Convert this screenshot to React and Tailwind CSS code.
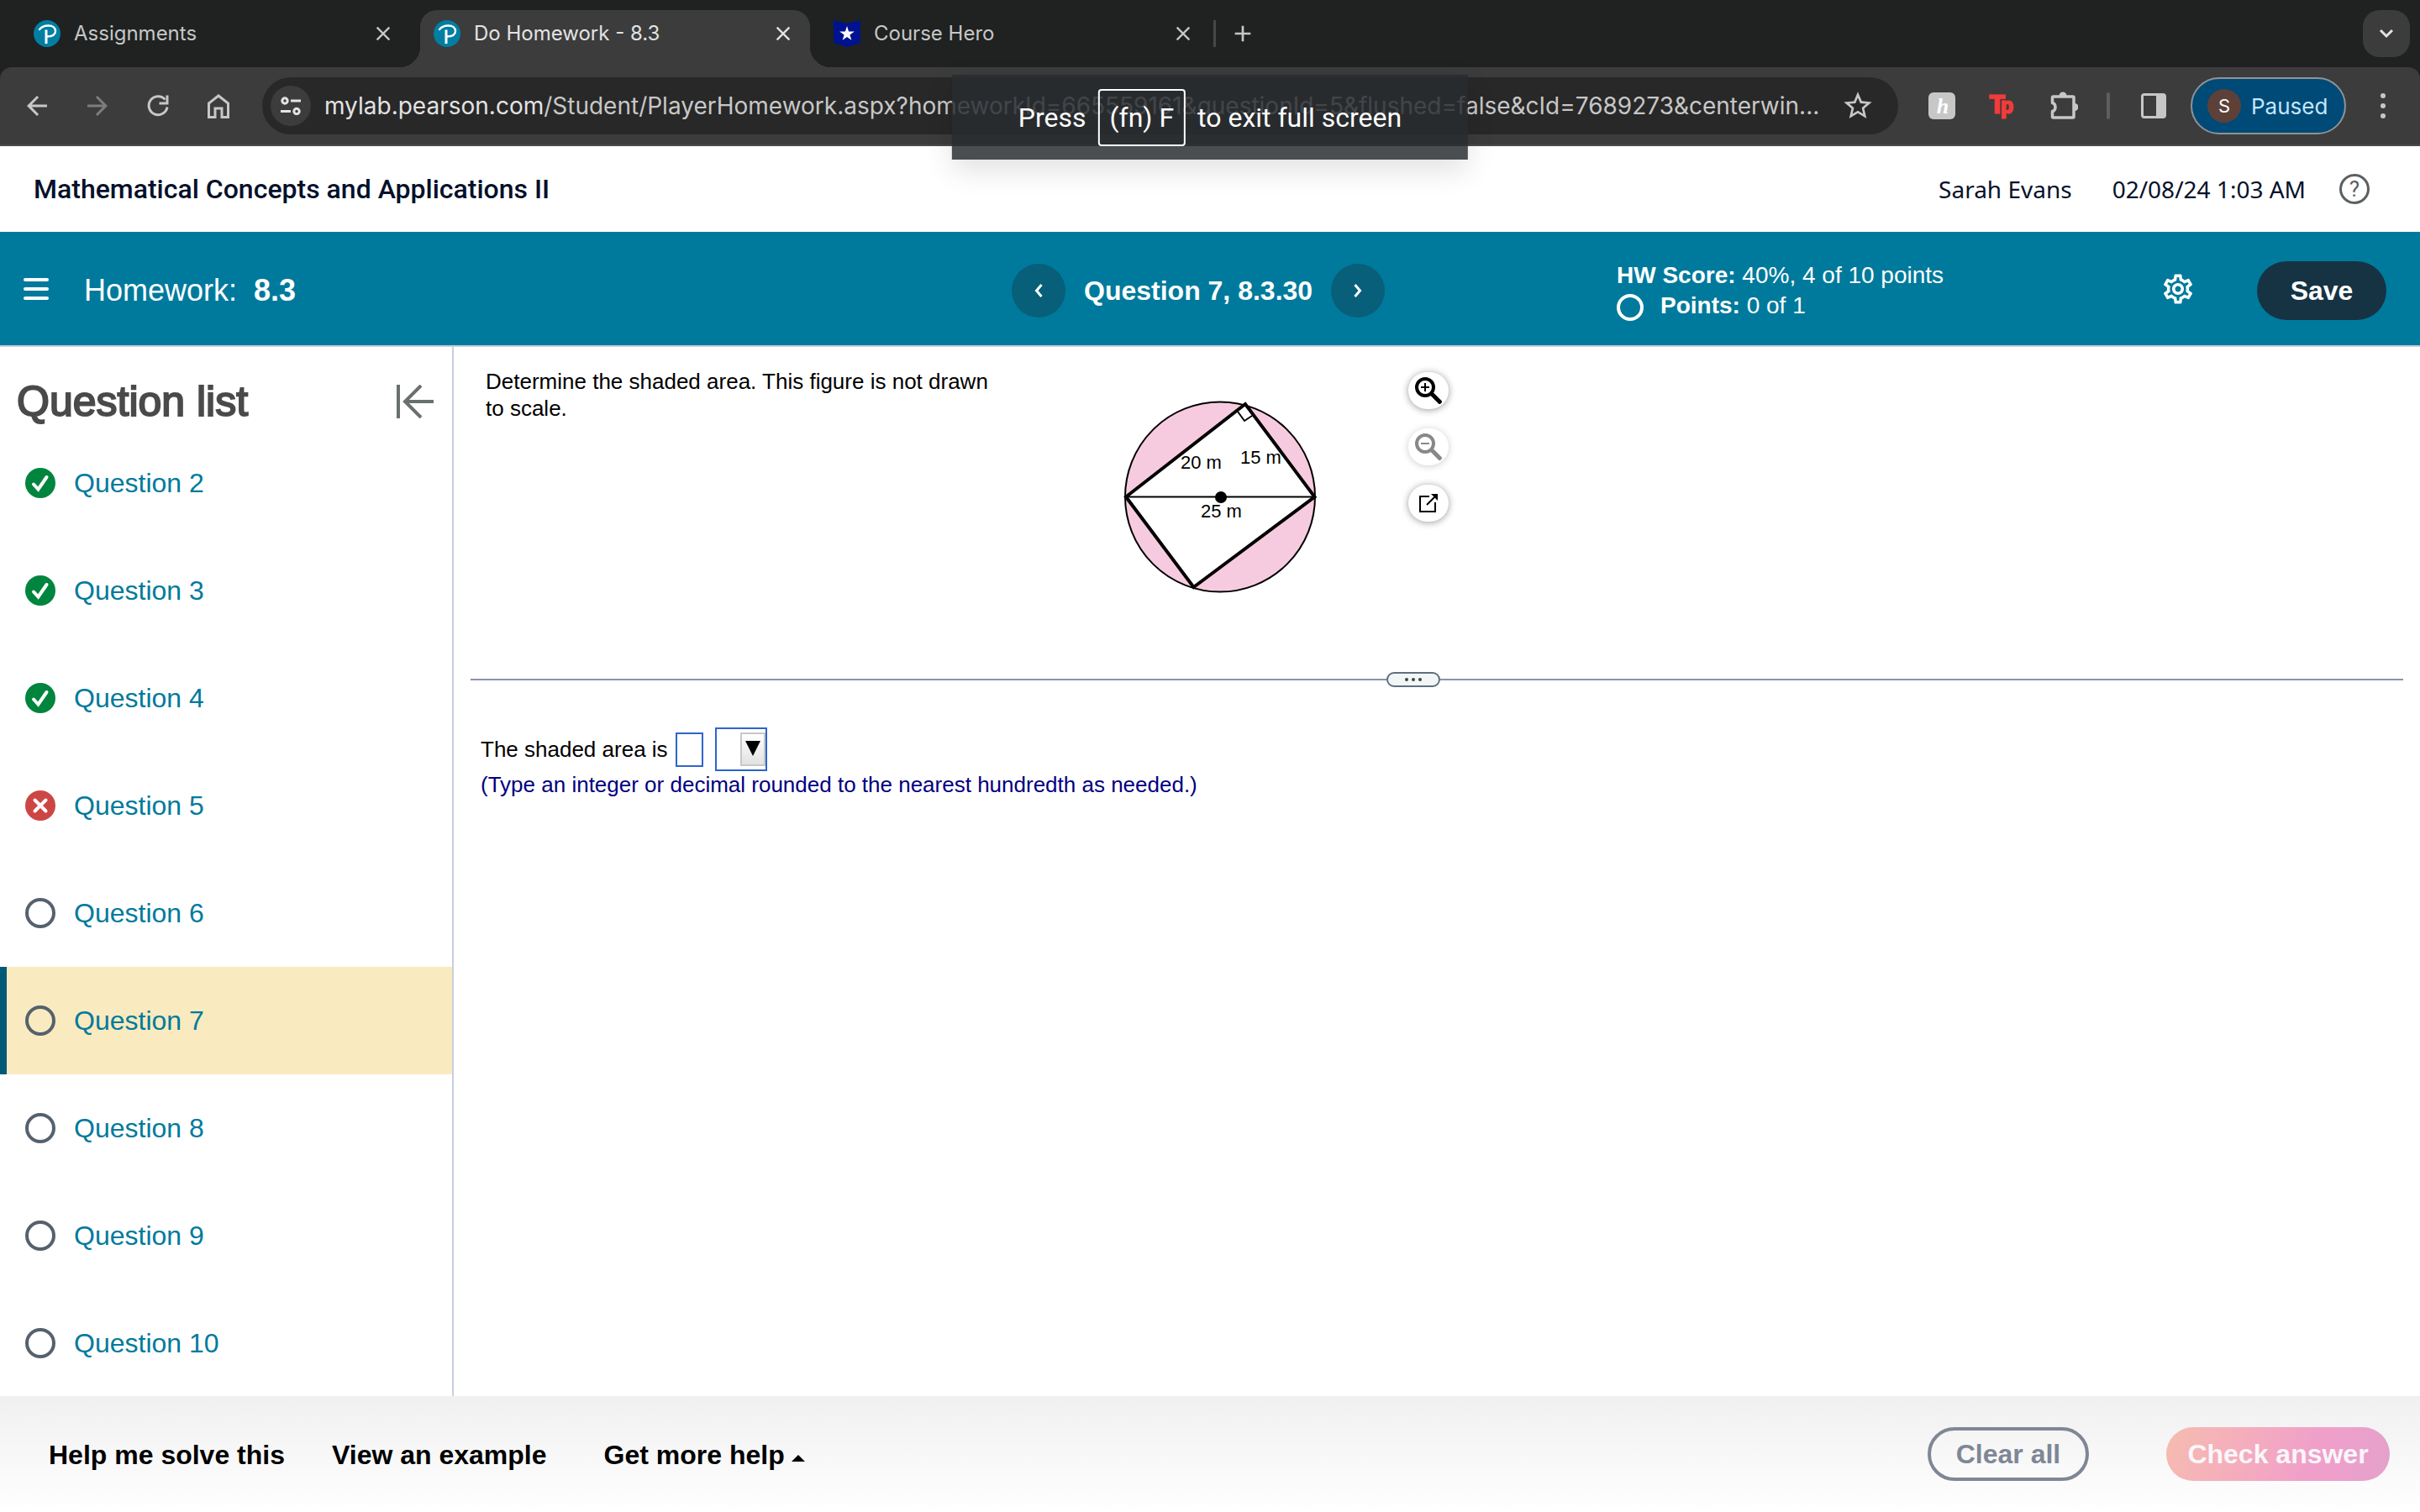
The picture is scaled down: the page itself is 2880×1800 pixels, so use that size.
import {
  MdArrowBack,
  MdArrowForward,
  MdClose,
  MdAdd,
  MdStarOutline,
  MdOutlineSettings,
  MdKeyboardArrowDown,
} from "react-icons/md";

const TABS = [
  { title: "Assignments", icon: "pearson" },
  { title: "Do Homework - 8.3", icon: "pearson", active: true },
  { title: "Course Hero", icon: "hero" },
];

const QUESTIONS = [
  { number: 2, status: "correct" },
  { number: 3, status: "correct" },
  { number: 4, status: "correct" },
  { number: 5, status: "wrong" },
  { number: 6, status: "open" },
  { number: 7, status: "open", current: true },
  { number: 8, status: "open" },
  { number: 9, status: "open" },
  { number: 10, status: "open" },
];

function PearsonIcon() {
  return (
    <svg viewBox="0 0 32 32" className="size-8 shrink-0" aria-hidden>
      <circle cx="16" cy="16" r="16" fill="#007fa3" />
      <path d="M7 11C9.500 8 13 6.500 17.500 6.500c5 0 8.500 2.500 8.500 6.500s-3.500 6.500-10.500 6.500" fill="none" stroke="#fff" strokeWidth="2.400" strokeLinecap="round" />
      <path d="M15 11.500V28" stroke="#fff" strokeWidth="3" />
    </svg>
  );
}

function CourseHeroIcon() {
  return (
    <svg viewBox="0 0 32 32" className="size-8 shrink-0" aria-hidden>
      <path d="M0 0l16 4L32 0v27l-16 5L0 27z" fill="#00128f" />
      <path d="M16 7l2.1 6.4h6.7l-5.4 4 2 6.4-5.4-3.9-5.4 3.9 2-6.4-5.4-4h6.7z" fill="#fff" />
    </svg>
  );
}

function Tab({ tab }) {
  return (
    <div
      className={
        tab.active
          ? "relative flex h-[68px] w-[464px] items-center rounded-t-[20px] bg-[#3c3c3c] px-4 pb-3 text-[#e3e3e3]"
          : "flex h-[68px] w-[464px] items-center px-4 pb-3 text-[#c7c7c7]"
      }
    >
      {tab.active ? (
        <>
          <span className="absolute bottom-0 -left-6 size-6 bg-[radial-gradient(circle_at_0_0,transparent_24px,#3c3c3c_24px)]" />
          <span className="absolute -right-6 bottom-0 size-6 bg-[radial-gradient(circle_at_100%_0,transparent_24px,#3c3c3c_24px)]" />
        </>
      ) : null}
      {tab.icon === "pearson" ? <PearsonIcon /> : <CourseHeroIcon />}
      <span className="ml-4 flex-1 truncate text-[24px] leading-8">{tab.title}</span>
      <button type="button" aria-label={`Close ${tab.title}`} className="flex size-8 items-center justify-center">
        <MdClose className="size-7" />
      </button>
    </div>
  );
}

function TabStrip() {
  return (
    <div className="flex items-start bg-[#1f2221] pt-3 pr-3 pl-6">
      <div className="flex gap-3">
        {TABS.map((tab) => (
          <Tab key={tab.title} tab={tab} />
        ))}
      </div>
      <span className="mt-3 ml-1 h-8 w-[3px] bg-[#474747]" />
      <button type="button" aria-label="New tab" className="ml-4 flex h-14 w-8 items-center justify-center text-[#c7c7c7]">
        <MdAdd className="size-8" />
      </button>
      <button type="button" aria-label="Search tabs" className="ml-auto flex size-14 items-center justify-center rounded-[20px] bg-[#3c3c3c] text-[#e3e3e3]">
        <svg viewBox="0 0 18 12" className="h-3 w-[18px]" fill="none" stroke="currentColor" strokeWidth="3" aria-hidden>
          <path d="M2 2l7 7 7-7" />
        </svg>
      </button>
    </div>
  );
}

function ReloadIcon() {
  return (
    <svg viewBox="0 0 26 26" className="size-[26px]" fill="none" stroke="currentColor" strokeWidth="3" aria-hidden>
      <path d="M24 14.500A11 11 0 1 1 21.500 5.500" />
      <path d="M24 .5V10H14.500" />
    </svg>
  );
}

function HomeIcon() {
  return (
    <svg viewBox="0 0 26 29" className="h-[29px] w-[26px]" fill="none" stroke="currentColor" strokeWidth="3" aria-hidden>
      <path d="M1.500 27.500V11L13 2l11.500 9V27.500H17V17H9v10.500z" />
    </svg>
  );
}

function SiteInfoIcon() {
  return (
    <svg viewBox="0 0 24 22" className="h-[22px] w-6" fill="none" stroke="currentColor" strokeWidth="3" aria-hidden>
      <circle cx="5" cy="5" r="3.200" />
      <path d="M12 5h12M0 17.500h12" />
      <circle cx="19" cy="17.500" r="3.200" />
    </svg>
  );
}

function PuzzleIcon() {
  return (
    <svg viewBox="0 0 34 34" className="size-[34px]" aria-hidden>
      <path
        d="M4.500 6H28a1 1 0 0 1 1 1V30a1 1 0 0 1-1 1H4.500a1 1 0 0 1-1-1V23.500c2.500-.5 3.500-2.500 3.500-5s-1-4.500-3.500-5V7a1 1 0 0 1 1-1z"
        fill="none"
        stroke="#c7c7c7"
        strokeWidth="3.500"
        strokeLinejoin="round"
      />
      <path d="M11.500 5a4.500 4.500 0 0 1 9 0zM30 14a4.500 4.500 0 0 1 0 9z" fill="#c7c7c7" />
    </svg>
  );
}

function Toolbar() {
  return (
    <div className="bg-[#1f2221]">
      <div className="flex items-center rounded-t-[14px] border-b-2 border-[#4a4a4a] bg-[#3c3c3c] py-3 pl-[26px] text-[#c7c7c7]">
        <div className="flex gap-9">
          <button type="button" aria-label="Back" className="flex size-9 items-center justify-center">
            <MdArrowBack className="size-9" />
          </button>
          <button type="button" aria-label="Forward" className="flex size-9 items-center justify-center text-[#7d7d7d]">
            <MdArrowForward className="size-9" />
          </button>
          <button type="button" aria-label="Reload" className="flex size-9 items-center justify-center">
            <ReloadIcon />
          </button>
          <button type="button" aria-label="Home" className="flex size-9 items-center justify-center">
            <HomeIcon />
          </button>
        </div>
        <div className="ml-[34px] flex h-[68px] min-w-0 flex-1 items-center rounded-full bg-[#282828] pr-7 pl-[10px]">
          <button type="button" aria-label="Site information" className="flex size-12 shrink-0 items-center justify-center rounded-full bg-[#3c3c3c] text-[#e3e3e3]">
            <SiteInfoIcon />
          </button>
          <div className="ml-4 min-w-0 flex-1 truncate text-[28px] leading-9">
            <span className="text-[#e3e3e3]">mylab.pearson.com</span>
            /Student/PlayerHomework.aspx?homeworkId=665559161&amp;questionId=5&amp;flushed=false&amp;cId=7689273&amp;centerwin...
          </div>
          <button type="button" aria-label="Bookmark this page" className="shrink-0">
            <MdStarOutline className="size-10" />
          </button>
        </div>
        <div className="ml-9 flex shrink-0 items-center">
          <svg viewBox="0 0 32 32" className="size-8" aria-label="Honey">
            <rect width="32" height="32" rx="6" fill="#c7c7c7" />
            <text x="17" y="25" textAnchor="middle" fontFamily="Liberation Serif, serif" fontStyle="italic" fontWeight="700" fontSize="26" fill="#fff">
              h
            </text>
          </svg>
          <svg viewBox="0 0 32 32" className="ml-10 size-8" aria-label="Teacher extension">
            <text x="0" y="25" fontFamily="Roboto, sans-serif" fontWeight="900" fontSize="31" fill="#f33b3a" stroke="#f33b3a" strokeWidth="1">
              T
            </text>
            <text x="14" y="25" fontFamily="Roboto, sans-serif" fontWeight="900" fontSize="27" fill="#f33b3a" stroke="#f33b3a" strokeWidth="1">
              p
            </text>
          </svg>
          <button type="button" aria-label="Extensions" className="ml-10">
            <PuzzleIcon />
          </button>
          <span className="ml-[34px] h-8 w-1 rounded bg-[#5e5e5e]" />
          <button type="button" aria-label="Side panel" className="ml-[37px]">
            <svg viewBox="0 0 30 30" className="size-[30px]" aria-hidden>
              <rect x="1.500" y="1.500" width="27" height="27" rx="2.500" fill="none" stroke="#c7c7c7" strokeWidth="3" />
              <path d="M18 2h10v26H18z" fill="#c7c7c7" />
            </svg>
          </button>
          <button type="button" className="ml-[29px] flex h-[68px] w-[185px] items-center rounded-full border-2 border-[#8f9396] bg-[#004a77] pl-[18px] text-[26px] text-[#c2e7ff]">
            <span className="flex size-10 items-center justify-center rounded-full bg-[#5d4037] text-[22px] text-white">S</span>
            <span className="ml-3">Paused</span>
          </button>
          <button type="button" aria-label="Menu" className="flex w-[88px] flex-col items-center gap-[6px]">
            <span className="size-[6px] rounded-full bg-[#c7c7c7]" />
            <span className="size-[6px] rounded-full bg-[#c7c7c7]" />
            <span className="size-[6px] rounded-full bg-[#c7c7c7]" />
          </button>
        </div>
      </div>
    </div>
  );
}

function FullScreenNotice() {
  return (
    <div className="absolute top-[89px] left-1/2 flex h-[101px] -translate-x-1/2 items-center gap-[14px] bg-[#282c30]/84 px-[79px] font-[Roboto,sans-serif] text-[32px] leading-9 whitespace-nowrap text-white shadow-[0_12px_32px_rgba(0,0,0,0.12)]">
      Press
      <kbd className="flex h-[68px] items-center rounded border-2 border-white px-3 font-[Roboto,sans-serif]">(fn) F</kbd>
      to exit full screen
    </div>
  );
}

function CourseHeader() {
  return (
    <header className="flex h-[102px] shrink-0 items-center bg-white pr-[60px] pl-10 font-[Roboto,sans-serif] text-[32px] text-[#05112a]">
      <h1 className="font-medium">Mathematical Concepts and Applications II</h1>
      <span className="ml-auto font-['Noto_Sans',sans-serif] text-[28px]">Sarah Evans</span>
      <span className="ml-12 font-['Noto_Sans',sans-serif] text-[28px]">02/08/24 1:03 AM</span>
      <button type="button" aria-label="Help" className="ml-10 flex size-9 items-center justify-center rounded-full border-[3px] border-[#5a6060] text-[26px] text-[#5a6060]">
        ?
      </button>
    </header>
  );
}

function HomeworkBar() {
  return (
    <div className="grid h-[137px] shrink-0 grid-cols-[301fr_180fr_239fr] items-center border-b-2 border-[#c7cddd] bg-[#007a9c] pt-1 text-white">
      <div className="flex items-center pl-7">
        <button type="button" aria-label="Open menu" className="mb-1 flex w-[30px] flex-col gap-[7px]">
          <span className="h-1 rounded bg-white" />
          <span className="h-1 rounded bg-white" />
          <span className="h-1 rounded bg-white" />
        </button>
        <h2 className="ml-[42px] text-[36px]">
          Homework: <b className="ml-[10px]">8.3</b>
        </h2>
      </div>
      <div className="flex items-center gap-[22px]">
        <button type="button" aria-label="Previous question" className="flex size-16 items-center justify-center rounded-full bg-[#075f7a]">
          <svg viewBox="0 0 10 16" className="h-4 w-[10px]" fill="none" stroke="#fff" strokeWidth="3" aria-hidden>
            <path d="M8.500 1L2.500 8l6 7" />
          </svg>
        </button>
        <span className="text-[32px] font-bold whitespace-nowrap">Question 7, 8.3.30</span>
        <button type="button" aria-label="Next question" className="flex size-16 items-center justify-center rounded-full bg-[#075f7a]">
          <svg viewBox="0 0 10 16" className="h-4 w-[10px]" fill="none" stroke="#fff" strokeWidth="3" aria-hidden>
            <path d="M1.500 1l6 7-6 7" />
          </svg>
        </button>
      </div>
      <div className="flex items-center pr-10">
        <div className="text-[28px] leading-9">
          <p>
            <b>HW Score:</b> 40%, 4 of 10 points
          </p>
          <p className="flex items-center">
            <span className="mt-1 mr-5 size-8 rounded-full border-4 border-white" />
            <span>
              <b>Points:</b> 0 of 1
            </span>
          </p>
        </div>
        <button type="button" aria-label="Settings" className="mr-[73px] mb-1 ml-auto">
          <MdOutlineSettings className="size-[42px]" />
        </button>
        <button type="button" className="h-[70px] w-[154px] rounded-full bg-[#163344] text-[32px] font-bold">
          Save
        </button>
      </div>
    </div>
  );
}

function StatusIcon({ status }) {
  if (status === "correct") {
    return (
      <svg viewBox="0 0 36 36" className="size-9" role="img" aria-label="Correct">
        <circle cx="18" cy="18" r="18" fill="#00853e" />
        <path d="M10 19.500l5.500 6L25.500 11" fill="none" stroke="#fff" strokeWidth="4" strokeLinecap="round" />
      </svg>
    );
  }
  if (status === "wrong") {
    return (
      <svg viewBox="0 0 36 36" className="size-9" role="img" aria-label="Incorrect">
        <circle cx="18" cy="18" r="18" fill="#cd4646" />
        <path d="M11.500 11.500l13 13M24.500 11.500l-13 13" stroke="#fff" strokeWidth="4" strokeLinecap="round" />
      </svg>
    );
  }
  return <span className="size-9 rounded-full border-4 border-[#55616e]" />;
}

function QuestionList() {
  return (
    <aside className="w-[540px] shrink-0 overflow-hidden border-r-2 border-[#c9cfdf]">
      <div className="flex h-[98px] items-center justify-between pt-8 pr-[22px] pl-5">
        <h2 className="text-[50px] leading-[60px] text-[#4a4a4a] [-webkit-text-stroke:2px_#4a4a4a]">Question list</h2>
        <button type="button" aria-label="Collapse question list">
          <svg viewBox="0 0 44 40" className="h-10 w-11" fill="none" stroke="#6a7070" strokeWidth="4" aria-hidden>
            <path d="M2 0v40M44 20H11M29 1L10 20l19 19" />
          </svg>
        </button>
      </div>
      <ul>
        {QUESTIONS.map((q) => (
          <li
            key={q.number}
            className={
              q.current
                ? "flex h-32 items-center border-l-8 border-[#005a76] bg-[#f9eabf] pl-[22px]"
                : "flex h-32 items-center pl-[30px]"
            }
          >
            <StatusIcon status={q.status} />
            <a href={`#question-${q.number}`} className="ml-[22px] text-[32px] leading-9 text-[#007a9c]">
              Question {q.number}
            </a>
          </li>
        ))}
      </ul>
    </aside>
  );
}

function Figure() {
  return (
    <svg viewBox="0 0 232 232" className="mt-[37px] size-[232px] shrink-0" role="img" aria-label="Rectangle inscribed in a circle">
      <circle cx="116" cy="116.500" r="113" fill="#f7cbdf" stroke="#000" strokeWidth="2" />
      <path d="M4 116.500L146 6l82.500 110.500L84.500 224z" fill="#fff" stroke="#000" strokeWidth="4" />
      <path d="M4 116.500h225" stroke="#000" strokeWidth="2" />
      <path d="M137 15l8 11 9-6" fill="none" stroke="#000" strokeWidth="2" />
      <circle cx="117" cy="117" r="7" />
      <g fontFamily="Liberation Sans, Arial, sans-serif" fontSize="22">
        <text x="69" y="83">20 m</text>
        <text x="140" y="77">15 m</text>
        <text x="93" y="141">25 m</text>
      </g>
    </svg>
  );
}

function MagnifierIcon({ plus }) {
  return (
    <svg viewBox="0 0 32 32" className="size-8" fill="none" stroke="currentColor" aria-hidden>
      <circle cx="12" cy="12" r="10" strokeWidth="4" />
      <path d="M19.500 19.500L31 31" strokeWidth="5" />
      <path d={plus ? "M7 12h10M12 7v10" : "M7 12h10"} strokeWidth="2" />
    </svg>
  );
}

function FigureTools() {
  const base = "flex h-11 w-12 items-center justify-center rounded-full bg-white shadow-[0_1px_8px_rgba(0,0,0,0.4)]";
  return (
    <div className="mt-[5px] ml-[108px] flex flex-col gap-[23px]">
      <button type="button" aria-label="Zoom in" className={base}>
        <MagnifierIcon plus />
      </button>
      <button type="button" aria-label="Zoom out" disabled className="flex h-11 w-12 items-center justify-center rounded-full bg-white text-[#888] shadow-[0_1px_8px_rgba(0,0,0,0.2)]">
        <MagnifierIcon />
      </button>
      <button type="button" aria-label="Open in new window" className={base}>
        <svg viewBox="0 0 24 24" className="size-6" fill="none" stroke="currentColor" strokeWidth="2" aria-hidden>
          <path d="M13 4H2v18h18V11M10 14L20 4" />
          <path d="M15 1h8v8z" fill="currentColor" stroke="none" />
        </svg>
      </button>
    </div>
  );
}

function QuestionPanel() {
  return (
    <main className="min-w-0 flex-1 text-[26px] leading-8 text-black">
      <section className="flex items-start pt-[25px] pb-[93px] pl-[38px]">
        <p className="mr-[138px] w-[620px]">Determine the shaded area. This figure is not drawn to scale.</p>
        <Figure />
        <FigureTools />
      </section>
      <div className="flex items-center px-5">
        <span className="h-[2px] w-[1090px] bg-[#8b92aa]" />
        <button type="button" aria-label="Resize panels" className="flex h-[18px] w-16 items-center justify-center gap-1 rounded-[9px] border-2 border-[#5f6f7e] bg-[#f3f6f7]">
          <span className="size-1 rounded-full bg-[#444]" />
          <span className="size-1 rounded-full bg-[#444]" />
          <span className="size-1 rounded-full bg-[#444]" />
        </button>
        <span className="h-[2px] flex-1 bg-[#8b92aa]" />
      </div>
      <form className="pt-12 pl-8">
        <div className="flex items-center">
          <label htmlFor="area">The shaded area is</label>
          <input id="area" type="text" className="ml-[9px] h-[41px] w-[33px] border-2 border-[#2c66cc] px-1 outline-none" />
          <div className="relative ml-[14px]">
            <select aria-label="Unit" className="block h-[52px] w-[62px] appearance-none border-2 border-[#2c66cc] bg-white outline-none">
              <option value=""></option>
              <option value="m">m</option>
              <option value="m2">m²</option>
            </select>
            <span className="pointer-events-none absolute top-[6px] right-[2px] flex h-10 w-[30px] items-start justify-center border-2 border-[#c8c8c8] bg-linear-to-b from-white to-[#e2e2e2] pt-2">
              <svg viewBox="0 0 18 18" className="size-[18px]" aria-hidden>
                <path d="M0 0h18L9 18z" />
              </svg>
            </span>
          </div>
        </div>
        <p className="text-[#000080]">(Type an integer or decimal rounded to the nearest hundredth as needed.)</p>
      </form>
    </main>
  );
}

function Footer() {
  return (
    <footer className="flex h-[138px] shrink-0 items-center bg-linear-to-b from-[#f0f0f0] to-white pr-9 pl-[58px] text-[32px] font-bold text-black">
      <button type="button" className="pt-[2px]">
        Help me solve this
      </button>
      <button type="button" className="ml-14 pt-[2px]">
        View an example
      </button>
      <button type="button" className="ml-[68px] flex items-center pt-[2px]">
        Get more help
        <svg viewBox="0 0 16 8" className="mt-2 ml-2 h-2 w-4" aria-hidden>
          <path d="M8 0l8 8H0z" />
        </svg>
      </button>
      <button type="button" className="ml-auto h-16 w-48 rounded-full border-4 border-[#7f8796] text-[#7f8796]">
        Clear all
      </button>
      <button type="button" className="ml-[92px] h-16 w-[266px] rounded-full bg-linear-[110deg,#f5bcb0,#f5afbb_30%,#f09fca_66%,#e3a2cb] text-[#faf6fa]">
        Check answer
      </button>
    </footer>
  );
}

export default function App() {
  return (
    <div className="relative flex h-screen flex-col overflow-hidden bg-white font-['Liberation_Sans',Arial,sans-serif]">
      <div className="shrink-0 font-[Inter,sans-serif]">
        <TabStrip />
        <Toolbar />
      </div>
      <CourseHeader />
      <HomeworkBar />
      <div className="flex min-h-0 flex-1">
        <QuestionList />
        <QuestionPanel />
      </div>
      <Footer />
      <FullScreenNotice />
    </div>
  );
}
